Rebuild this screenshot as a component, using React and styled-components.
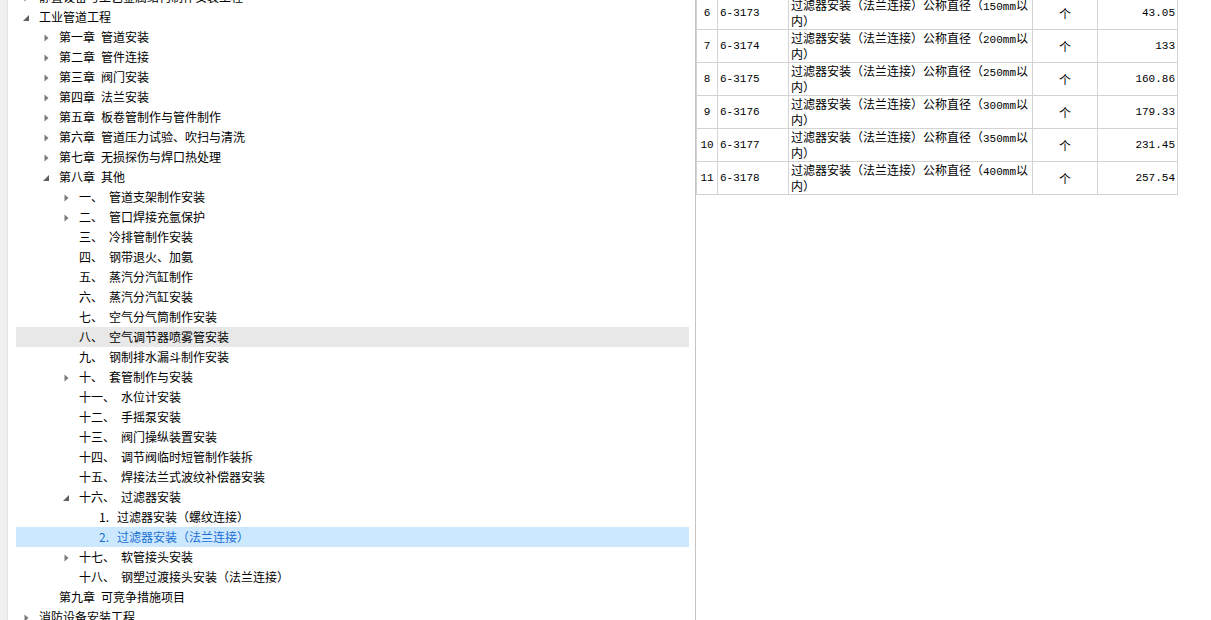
import React from 'react';
import styled, { createGlobalStyle } from 'styled-components';

const Global = createGlobalStyle`
  html, body { margin: 0; padding: 0; background: #fff; overflow: hidden; }
  body {
    font-family: "Noto Sans CJK SC", "Noto Sans", sans-serif;
    font-size: 12px;
    color: #000;
  }
`;

const Page = styled.div`
  display: flex;
  width: 1211px;
  height: 620px;
  overflow: hidden;
`;

const SideStrip = styled.div`
  flex: none;
  width: 7px;
  background: #f0f0f0;
  border-right: 1px solid #e3e3e3;
`;

const TreePane = styled.div`
  flex: none;
  width: 688px;
  box-sizing: border-box;
  padding: 0 6px 0 8px;
  border-right: 1px solid #c4c4c4;
  overflow: hidden;
`;

const TreeList = styled.div`
  display: flex;
  flex-direction: column;
  margin-top: -13px;
`;

const Row = styled.div`
  display: flex;
  align-items: center;
  height: 20px;
  line-height: 20px;
  white-space: nowrap;
  padding-left: ${p => 6 + p.$level * 20}px;
  background: ${p => (p.$state === 'selected' ? '#cce8ff' : p.$state === 'hover' ? '#e8e8e8' : 'transparent')};
  color: ${p => (p.$state === 'selected' ? '#1b6fd4' : '#000')};
`;

const ArrowBox = styled.span`
  flex: none;
  width: 16px;
  height: 20px;
  margin-right: 1px;
  display: flex;
  align-items: center;
  padding-left: ${p => (p.$open ? 1 : 2)}px;
  box-sizing: border-box;
  padding-top: ${p => (p.$open ? 3 : 2)}px;
`;

const Label = styled.span`
  flex: none;
  display: inline-block;
  min-width: ${p => (p.$w ? `${p.$w}px` : 'auto')};
  margin-right: 6px;
`;

const Text = styled.span``;

const Arrow = ({ open }) =>
  open ? (
    <svg width="7" height="7" viewBox="0 0 7 7">
      <polygon points="6,0 6,6 0,6" fill="#5f5f5f" />
    </svg>
  ) : (
    <svg width="5" height="8" viewBox="0 0 5 8">
      <polygon points="0.5,0.5 4.5,4 0.5,7.5" fill="#7a7a7a" />
    </svg>
  );

const tree = [
  { l: 0, a: 'c', t: '静置设备与工艺金属结构制作安装工程' },
  { l: 0, a: 'o', t: '工业管道工程' },
  { l: 1, a: 'c', n: '第一章', t: '管道安装' },
  { l: 1, a: 'c', n: '第二章', t: '管件连接' },
  { l: 1, a: 'c', n: '第三章', t: '阀门安装' },
  { l: 1, a: 'c', n: '第四章', t: '法兰安装' },
  { l: 1, a: 'c', n: '第五章', t: '板卷管制作与管件制作' },
  { l: 1, a: 'c', n: '第六章', t: '管道压力试验、吹扫与清洗' },
  { l: 1, a: 'c', n: '第七章', t: '无损探伤与焊口热处理' },
  { l: 1, a: 'o', n: '第八章', t: '其他' },
  { l: 2, a: 'c', n: '一、', t: '管道支架制作安装' },
  { l: 2, a: 'c', n: '二、', t: '管口焊接充氩保护' },
  { l: 2, n: '三、', t: '冷排管制作安装' },
  { l: 2, n: '四、', t: '钢带退火、加氨' },
  { l: 2, n: '五、', t: '蒸汽分汽缸制作' },
  { l: 2, n: '六、', t: '蒸汽分汽缸安装' },
  { l: 2, n: '七、', t: '空气分气筒制作安装' },
  { l: 2, n: '八、', t: '空气调节器喷雾管安装', s: 'hover' },
  { l: 2, n: '九、', t: '钢制排水漏斗制作安装' },
  { l: 2, a: 'c', n: '十、', t: '套管制作与安装' },
  { l: 2, n: '十一、', t: '水位计安装' },
  { l: 2, n: '十二、', t: '手摇泵安装' },
  { l: 2, n: '十三、', t: '阀门操纵装置安装' },
  { l: 2, n: '十四、', t: '调节阀临时短管制作装拆' },
  { l: 2, n: '十五、', t: '焊接法兰式波纹补偿器安装' },
  { l: 2, a: 'o', n: '十六、', t: '过滤器安装' },
  { l: 3, n: '1.', w: 12, t: '过滤器安装（螺纹连接）' },
  { l: 3, n: '2.', w: 12, t: '过滤器安装（法兰连接）', s: 'selected' },
  { l: 2, a: 'c', n: '十七、', t: '软管接头安装' },
  { l: 2, n: '十八、', t: '钢塑过渡接头安装（法兰连接）' },
  { l: 1, n: '第九章', t: '可竞争措施项目' },
  { l: 0, a: 'c', t: '消防设备安装工程' },
];

const RightPane = styled.div`
  flex: 1;
  overflow: hidden;
`;

const Table = styled.div`
  display: flex;
  flex-direction: column;
  margin-top: -3px;
`;

const TableRow = styled.div`
  display: grid;
  grid-template-columns: 21px 71px 244px 65px 81px;
  height: 33px;
`;

const Cell = styled.div`
  box-sizing: border-box;
  height: 33px;
  border-left: 1px solid #d3d3d3;
  border-bottom: 1px solid #d3d3d3;
  border-right: ${p => (p.$last ? '1px solid #d3d3d3' : 'none')};
  display: flex;
  align-items: center;
  justify-content: ${p => p.$align || 'flex-start'};
  padding: 0 2px;
  overflow: hidden;
  white-space: nowrap;
`;

const MonoCell = styled(Cell)`
  font-family: "Liberation Mono", "Noto Sans CJK SC", monospace;
  font-size: 11px;
`;

const NameCell = styled(Cell)`
  display: block;
  padding-top: 1px;
  line-height: 13px;
`;

const NameLine = styled.div`
  white-space: nowrap;
  overflow: hidden;
`;

const Mm = styled.span`
  font-family: "Liberation Mono", monospace;
  font-size: 11px;
`;

const items = [
  { i: 6, c: '6-3173', d: '150', p: '43.05' },
  { i: 7, c: '6-3174', d: '200', p: '133' },
  { i: 8, c: '6-3175', d: '250', p: '160.86' },
  { i: 9, c: '6-3176', d: '300', p: '179.33' },
  { i: 10, c: '6-3177', d: '350', p: '231.45' },
  { i: 11, c: '6-3178', d: '400', p: '257.54' },
];

export default function App() {
  return (
    <>
      <Global />
      <Page>
        <SideStrip />
        <TreePane>
          <TreeList>
            {tree.map((r, k) => (
              <Row key={k} $level={r.l} $state={r.s}>
                <ArrowBox $open={r.a === 'o'}>{r.a ? <Arrow open={r.a === 'o'} /> : null}</ArrowBox>
                {r.n ? <Label $w={r.w}>{r.n}</Label> : null}
                <Text>{r.t}</Text>
              </Row>
            ))}
          </TreeList>
        </TreePane>
        <RightPane>
          <Table>
            {items.map(it => (
              <TableRow key={it.i}>
                <MonoCell $align="center">{it.i}</MonoCell>
                <MonoCell>{it.c}</MonoCell>
                <NameCell>
                  <NameLine>
                    过滤器安装（法兰连接）公称直径（<Mm>{it.d}mm</Mm>以
                  </NameLine>
                  <NameLine>内）</NameLine>
                </NameCell>
                <Cell $align="center">个</Cell>
                <MonoCell $align="flex-end" $last>{it.p}</MonoCell>
              </TableRow>
            ))}
          </Table>
        </RightPane>
      </Page>
    </>
  );
}
